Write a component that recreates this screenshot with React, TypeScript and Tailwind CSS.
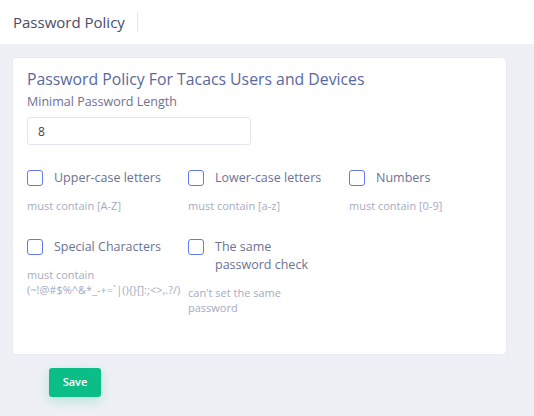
import React, { useState } from "react";

type Rule = {
  id: string;
  label: string[];
  hint: string[];
};

const rules: Rule[] = [
  { id: "upper", label: ["Upper-case letters"], hint: ["must contain [A-Z]"] },
  { id: "lower", label: ["Lower-case letters"], hint: ["must contain [a-z]"] },
  { id: "numbers", label: ["Numbers"], hint: ["must contain [0-9]"] },
  {
    id: "special",
    label: ["Special Characters"],
    hint: ["must contain", "(~!@#$%^&*_-+=`|(){}[]:;<>,.?/)"],
  },
  { id: "same", label: ["The same", "password check"], hint: ["can't set the same", "password"] },
];

const font = { fontFamily: '"Open Sans", "Liberation Sans", sans-serif' };

const App: React.FC = () => {
  const [minLength, setMinLength] = useState("8");
  const [checked, setChecked] = useState<Record<string, boolean>>({});

  const toggle = (id: string) => setChecked((c) => ({ ...c, [id]: !c[id] }));

  return (
    <div className="min-h-[416px] w-[534px] bg-[#eff0f6]" style={font}>
      {/* Top bar */}
      <div className="flex h-[44px] items-center bg-white pl-[13px]">
        <h1 className="text-[15px] text-[#4a4d66]">Password Policy</h1>
        <div className="ml-[12px] h-[20px] w-px bg-[#e4e6ef]" />
      </div>

      <div className="pl-[12px] pr-[27px] pt-[13px]">
        {/* Policy card */}
        <div className="h-[298px] rounded-[4px] border border-[#e9eaf2] bg-white px-[14px] pt-[10px]">
          <h2 className="text-[15.8px] font-medium leading-[22px] text-[#5a68a0]">
            Password Policy For Tacacs Users and Devices
          </h2>
          <label className="mt-[2px] block text-[12.5px] leading-[20px] text-[#6c7293]">
            Minimal Password Length
          </label>
          <input
            value={minLength}
            onChange={(e) => setMinLength(e.target.value)}
            className="mt-[5px] h-[28px] w-[224px] rounded-[3px] border border-[#e4e6ef] px-[10px] text-[12px] text-[#3f4254] outline-none"
          />

          <div className="mt-[24px] grid grid-cols-[161px_161px_161px] gap-y-[25px]">
            {rules.map((r) => (
              <div key={r.id}>
                <button
                  type="button"
                  onClick={() => toggle(r.id)}
                  className="flex items-start gap-[11px] text-left"
                >
                  <span
                    className={
                      checked[r.id]
                        ? "mt-px h-[16px] w-[16px] shrink-0 rounded-[3px] border border-[#6478f0] bg-[#6478f0]"
                        : "mt-px h-[16px] w-[16px] shrink-0 rounded-[3px] border border-[#6478f0] bg-white"
                    }
                  />
                  <span className="text-[12.5px] leading-[18px] text-[#6c7293]">
                    {r.label.map((l) => (
                      <span key={l} className="block">
                        {l}
                      </span>
                    ))}
                  </span>
                </button>
                <div className="mt-[11px] text-[11px] leading-[15px] text-[#a7abc0]">
                  {r.hint.map((h) => (
                    <div key={h}>{h}</div>
                  ))}
                </div>
              </div>
            ))}
          </div>
        </div>

        <button
          type="button"
          className="ml-[37px] mt-[13px] h-[29px] w-[52px] rounded-[3px] bg-[#0bbd87] text-[11px] font-semibold text-white shadow-[0_4px_12px_rgba(11,189,135,0.25)]"
        >
          Save
        </button>
      </div>
    </div>
  );
};

export default App;
